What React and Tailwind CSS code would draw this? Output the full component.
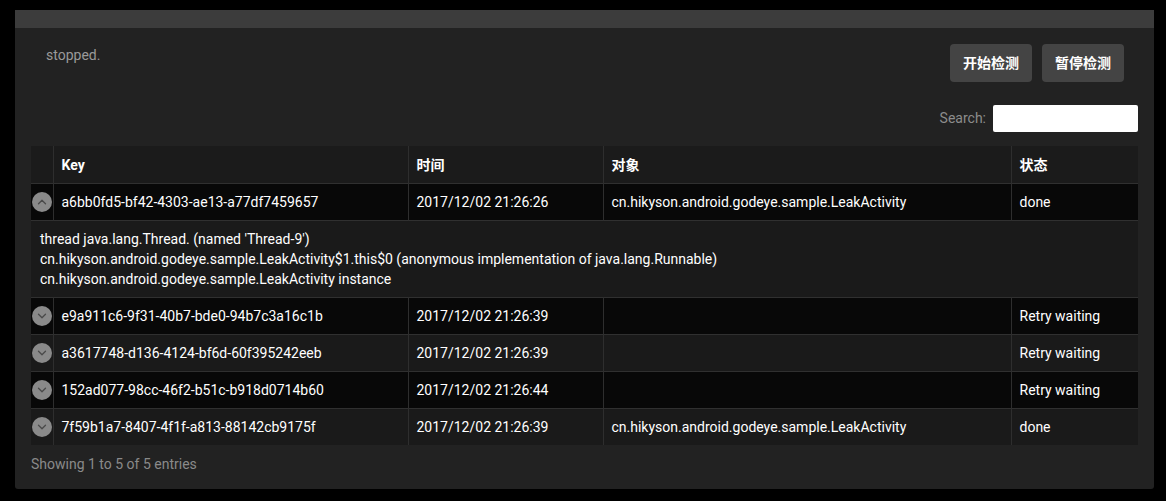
import { ChevronUp, ChevronDown } from 'lucide-react'

const ROWS = [
  { key: 'a6bb0fd5-bf42-4303-ae13-a77df7459657', time: '2017/12/02 21:26:26', obj: 'cn.hikyson.android.godeye.sample.LeakActivity', state: 'done', open: true },
  { key: 'e9a911c6-9f31-40b7-bde0-94b7c3a16c1b', time: '2017/12/02 21:26:39', obj: '', state: 'Retry waiting' },
  { key: 'a3617748-d136-4124-bf6d-60f395242eeb', time: '2017/12/02 21:26:39', obj: '', state: 'Retry waiting' },
  { key: '152ad077-98cc-46f2-b51c-b918d0714b60', time: '2017/12/02 21:26:44', obj: '', state: 'Retry waiting' },
  { key: '7f59b1a7-8407-4f1f-a813-88142cb9175f', time: '2017/12/02 21:26:39', obj: 'cn.hikyson.android.godeye.sample.LeakActivity', state: 'done' },
]

const DETAIL = [
  "thread java.lang.Thread. (named 'Thread-9')",
  'cn.hikyson.android.godeye.sample.LeakActivity$1.this$0 (anonymous implementation of java.lang.Runnable)',
  'cn.hikyson.android.godeye.sample.LeakActivity instance',
]

function Toggle({ open }) {
  const Icon = open ? ChevronUp : ChevronDown
  return (
    <span className="w-5 h-5 rounded-full bg-[#8a8a8a] flex items-center justify-center ml-[1px]">
      <Icon size={14} strokeWidth={2.2} className="text-[#4a4a4a]" />
    </span>
  )
}

export default function App() {
  const font = { fontFamily: 'Roboto, "Noto Sans CJK SC", sans-serif' }
  // body rows alternate dark / lighter, detail row shares the lighter tone
  let stripe = 0

  return (
    <div className="w-[1166px] h-[501px] bg-black pt-[10px] pl-[15px]" style={font}>
      <div className="w-[1139px] h-[479px] bg-[#222222] rounded-b-[3px] flex flex-col">
        <div className="h-[18px] bg-[#3c3c3c]" />

        <div className="px-4 pt-4 flex justify-between">
          <p className="text-[14px] text-[#9a9a9a] pl-[15px] mt-[3px] leading-4">stopped.</p>
          <div className="flex gap-[10px] pr-[14px]">
            <button className="w-[82px] h-[38px] rounded-[4px] bg-[#444] text-white text-[14px] font-bold">开始检测</button>
            <button className="w-[82px] h-[38px] rounded-[4px] bg-[#444] text-white text-[14px] font-bold">暂停检测</button>
          </div>
        </div>

        <div className="flex items-center justify-end pr-[16px] mt-[23px] gap-[7px]">
          <span className="text-[14px] text-[#8c8c8c]">Search:</span>
          <input className="w-[145px] h-[27px] bg-white rounded-[2px] outline-none" />
        </div>

        <table className="ml-4 mt-[14px] w-[1107px] table-fixed border-collapse text-[14px] text-white">
          <colgroup>
            <col className="w-[22px]" />
            <col className="w-[355px]" />
            <col className="w-[195px]" />
            <col className="w-[408px]" />
            <col className="w-[127px]" />
          </colgroup>
          <thead>
            <tr className="h-[37px] bg-[#1b1b1b] text-left font-bold">
              <th className="border-r border-[#2e2e2e]" />
              <th className="px-2 pt-[2px] border-r border-[#2e2e2e]">Key</th>
              <th className="px-2 pt-[2px] border-r border-[#2e2e2e]">时间</th>
              <th className="px-2 pt-[2px] border-r border-[#2e2e2e]">对象</th>
              <th className="px-2 pt-[2px]">状态</th>
            </tr>
          </thead>
          <tbody>
            {ROWS.map((r) => {
              const bg = stripe++ % 2 === 0 ? 'bg-[#080808]' : 'bg-[#1a1a1a]'
              const rows = [
                <tr key={r.key} className={`h-[37px] border-t border-[#303030] ${bg}`}>
                  <td className="border-r border-[#2e2e2e] p-0"><Toggle open={r.open} /></td>
                  <td className="px-2 pt-[2px] border-r border-[#2e2e2e]">{r.key}</td>
                  <td className="px-2 pt-[2px] border-r border-[#2e2e2e]">{r.time}</td>
                  <td className="px-2 pt-[2px] border-r border-[#2e2e2e]">{r.obj}</td>
                  <td className="px-2 pt-[2px]">{r.state}</td>
                </tr>,
              ]
              if (r.open) {
                stripe++
                rows.push(
                  <tr key={r.key + '-d'} className="border-t border-[#303030] bg-[#1a1a1a]">
                    <td colSpan={5} className="px-[9px] pt-[8px] pb-[8px] leading-5">
                      {DETAIL.map((l) => <div key={l}>{l}</div>)}
                    </td>
                  </tr>
                )
              }
              return rows
            })}
          </tbody>
        </table>

        <p className="ml-4 mt-[9px] text-[14px] text-[#8a8a8a]">Showing 1 to 5 of 5 entries</p>
      </div>
    </div>
  )
}
